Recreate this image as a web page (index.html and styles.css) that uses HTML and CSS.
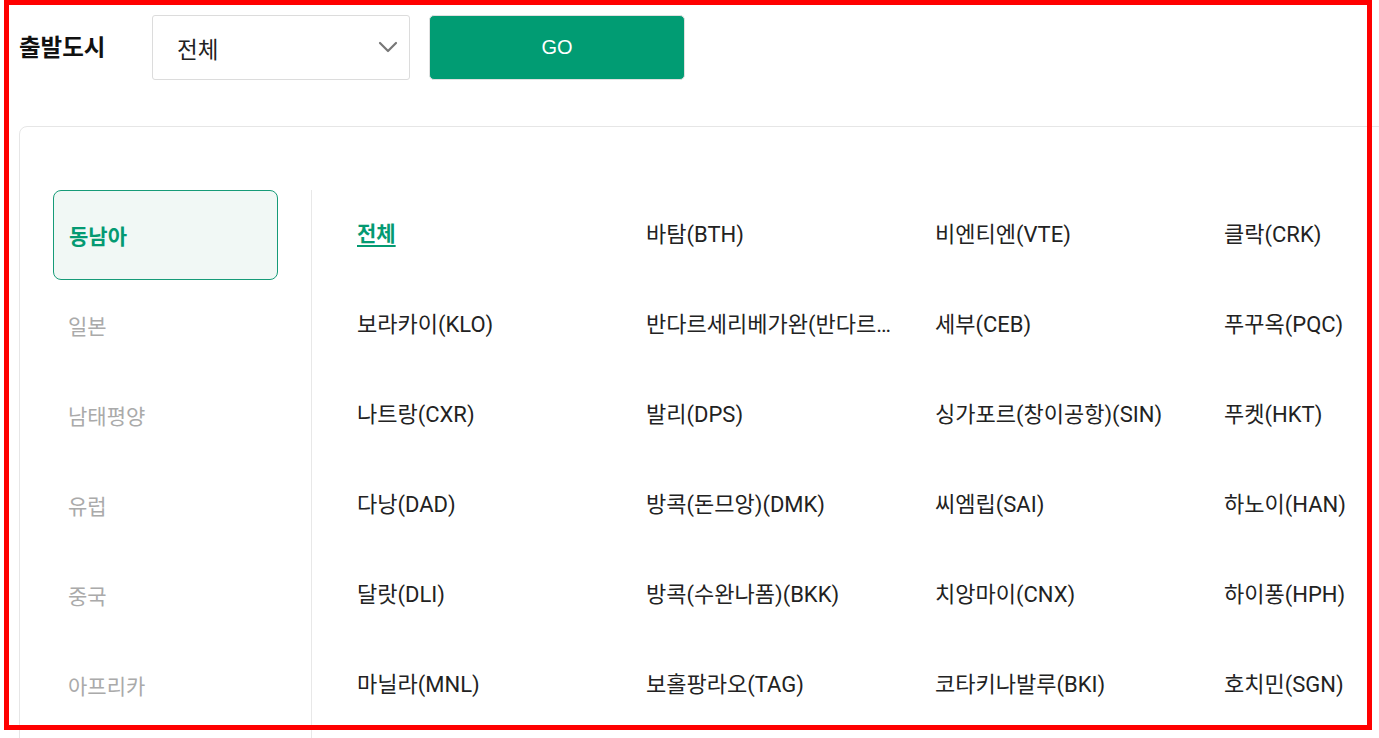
FILE: index.html
```html
<!DOCTYPE html>
<html lang="ko">
<head>
<meta charset="utf-8">
<title>출발도시</title>
<link rel="stylesheet" href="styles.css">
</head>
<body>
<div class="page">
  <div class="search">
    <span class="search-label">출발도시</span>
    <div class="select">
      <span class="select-value">전체</span>
      <svg class="chevron" width="20" height="12" viewBox="0 0 20 12"><path d="M2 2 L10 10 L18 2" fill="none" stroke="#777" stroke-width="2.2" stroke-linecap="round" stroke-linejoin="round"/></svg>
    </div>
    <button class="go">GO</button>
  </div>
  <div class="card">
    <ul class="regions">
      <li class="region active">동남아</li>
      <li class="region">일본</li>
      <li class="region">남태평양</li>
      <li class="region">유럽</li>
      <li class="region">중국</li>
      <li class="region">아프리카</li>
    </ul>
    <div class="divider"></div>
    <ul class="cities">
      <li class="city selected">전체</li>
      <li class="city">바탐(BTH)</li>
      <li class="city">비엔티엔(VTE)</li>
      <li class="city">클락(CRK)</li>
      <li class="city">보라카이(KLO)</li>
      <li class="city">반다르세리베가완(반다르세리베가완)(BWN)</li>
      <li class="city">세부(CEB)</li>
      <li class="city">푸꾸옥(PQC)</li>
      <li class="city">나트랑(CXR)</li>
      <li class="city">발리(DPS)</li>
      <li class="city">싱가포르(창이공항)(SIN)</li>
      <li class="city">푸켓(HKT)</li>
      <li class="city">다낭(DAD)</li>
      <li class="city">방콕(돈므앙)(DMK)</li>
      <li class="city">씨엠립(SAI)</li>
      <li class="city">하노이(HAN)</li>
      <li class="city">달랏(DLI)</li>
      <li class="city">방콕(수완나폼)(BKK)</li>
      <li class="city">치앙마이(CNX)</li>
      <li class="city">하이퐁(HPH)</li>
      <li class="city">마닐라(MNL)</li>
      <li class="city">보홀팡라오(TAG)</li>
      <li class="city">코타키나발루(BKI)</li>
      <li class="city">호치민(SGN)</li>
    </ul>
  </div>
</div>
<div class="frame"></div>
</body>
</html>
```

FILE: styles.css
```css
html, body {
  margin: 0;
  padding: 0;
  background: #fff;
  overflow: hidden;
}
body {
  width: 1379px;
  height: 738px;
  font-family: Roboto, "Noto Sans CJK KR", sans-serif;
  color: #222;
}
.page {
  padding: 15px 0 0 19px;
}
.search {
  display: flex;
  align-items: center;
  height: 65px;
}
.search-label {
  font-family: "Noto Sans CJK KR", sans-serif;
  font-size: 23.5px;
  font-weight: 700;
  color: #111;
  width: 133px;
  margin-top: -4px;
}
.select {
  box-sizing: border-box;
  width: 258px;
  height: 65px;
  border: 1px solid #dcdcdc;
  border-radius: 3px;
  display: flex;
  align-items: center;
  justify-content: space-between;
  padding: 0 11px 0 24px;
}
.select-value {
  font-family: "Noto Sans CJK KR", sans-serif;
  font-size: 22.5px;
  color: #222;
}
.chevron {
  display: block;
  margin-bottom: 2px;
}
.go {
  margin-left: 19px;
  width: 256px;
  height: 65px;
  border: 1px solid #e0e0e0;
  border-radius: 5px;
  background: #019c73;
  color: #fff;
  font-family: "Liberation Sans", Arial, sans-serif;
  font-size: 20px;
  padding: 0;
}
.card {
  margin-top: 46px;
  box-sizing: border-box;
  width: 1400px;
  height: 700px;
  border: 1px solid #e6e6e6;
  border-radius: 8px;
  padding: 63px 0 0 33px;
  display: flex;
  align-items: stretch;
}
.regions {
  list-style: none;
  margin: 0;
  padding: 0;
  width: 225px;
  flex: none;
}
.region {
  box-sizing: border-box;
  height: 90px;
  display: flex;
  align-items: center;
  padding-left: 14px;
  font-family: "Noto Sans CJK KR", sans-serif;
  font-size: 21px;
  color: #aaa;
  border: 1px solid transparent;
  border-radius: 8px;
}
.region.active {
  border-color: #169b78;
  background: #f1f8f5;
  color: #049a72;
  font-weight: 700;
  padding-left: 15px;
}
.divider {
  width: 1px;
  background: #e8e8e8;
  margin-left: 33px;
  flex: none;
}
.cities {
  list-style: none;
  margin: 0;
  padding: 0 0 0 45px;
  display: grid;
  grid-template-columns: repeat(4, 250px);
  grid-auto-rows: 90px;
  column-gap: 39px;
  align-content: start;
}
.city {
  display: block;
  line-height: 89px;
  font-size: 22px;
  color: #222;
  white-space: nowrap;
  overflow: hidden;
  text-overflow: ellipsis;
  min-width: 0;
}
.city.selected {
  color: #049a72;
  font-weight: 700;
  font-size: 21px;
  text-decoration: underline;
  text-underline-offset: 4px;
  text-decoration-thickness: 2px;
}
.frame {
  position: absolute;
  left: 4px;
  top: 0;
  width: 1368px;
  height: 730px;
  box-sizing: border-box;
  border: 5px solid #ff0000;
  pointer-events: none;
}
```
